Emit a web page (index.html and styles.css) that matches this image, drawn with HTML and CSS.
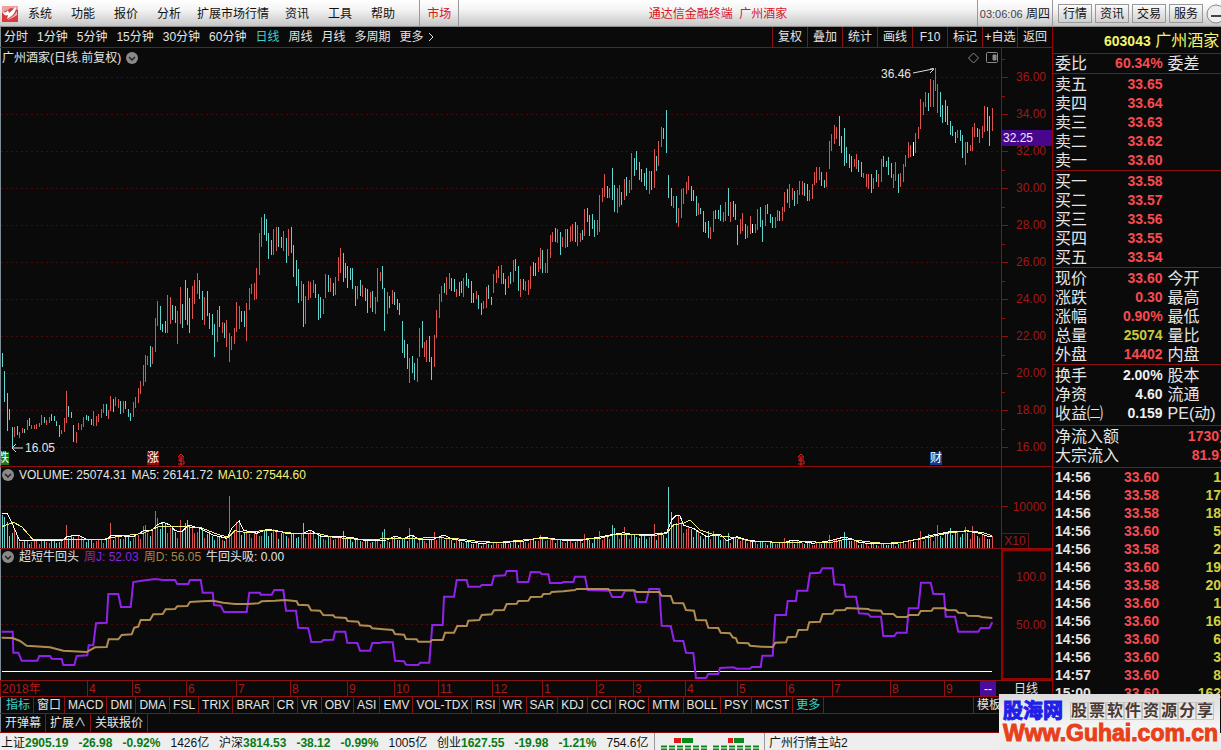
FILE: index.html
```html
<!DOCTYPE html>
<html lang="zh-CN">
<head>
<meta charset="utf-8">
<title>通达信金融终端 广州酒家</title>
<link rel="stylesheet" href="styles.css">
</head>
<body>
<header class="topbar">
  <svg class="logo" viewBox="0 0 16 16" aria-hidden="true">
    <rect width="16" height="16" fill="#d63a3c"/>
    <path d="M0 0h16v4L9 2 0 7z" fill="#e9a3a0"/>
    <path d="M1 6c2 1 4 0 5-2l1 3 7-6c0 5-3 9-9 12l1-4c-2 1-5 0-5-3z" fill="#fff"/>
    <path d="M15 5v4c-3 2-6 4-10 5 5-3 8-5 10-9z" fill="#f0b8b4"/>
  </svg>
  <nav class="menu">
    <button>系统</button><button>功能</button><button>报价</button><button>分析</button><button class="long">扩展市场行情</button><button>资讯</button><button>工具</button><button>帮助</button>
  </nav>
  <button class="market">市场</button>
  <h1 class="app-title">通达信金融终端&nbsp; 广州酒家</h1>
  <div class="clock"><span class="digits">03:06:06</span> 周四</div>
  <div class="quick">
    <button>行情</button><button>资讯</button><button>交易</button><button>服务</button>
    <button class="round" aria-label="最小化"><svg viewBox="0 0 20 20"><circle cx="10" cy="10" r="9" fill="#eee" stroke="#888"/><path d="M5 12h10" stroke="#444" stroke-width="2"/></svg></button>
  </div>
</header>

<main class="main">
  <section class="workspace">
    <div class="toolbar">
      <nav class="periods">
        <button>分时</button><button>1分钟</button><button>5分钟</button><button>15分钟</button><button>30分钟</button><button>60分钟</button><button class="on">日线</button><button>周线</button><button>月线</button><button>多周期</button><button>更多<svg class="more" viewBox="0 0 6 10"><path d="M1 1l4 4-4 4" fill="none" stroke="currentColor"/></svg></button>
      </nav>
      <nav class="tools">
        <button>复权</button><button>叠加</button><button>统计</button><button>画线</button><button>F10</button><button>标记</button><button>+自选</button><button>返回</button>
      </nav>
    </div>

    <div class="panel">
      <div class="plot">
        <div class="caption">
          <span>广州酒家(日线.前复权)</span>
          <svg class="drop" viewBox="0 0 12 12"><circle cx="6" cy="6" r="6" fill="#8a8a8a"/><path d="M3 5l3 3 3-3" fill="none" stroke="#222" stroke-width="1.5"/></svg>
          <svg class="view-icons" viewBox="0 0 30 12" fill="none" stroke="#8a8a8a"><path d="M5.500 1l5 5-5 5-5-5z"/><rect x="18.500" y=".5" width="11" height="10" rx="1"/><path d="M25 3h3v5h-3z" fill="#8a8a8a"/></svg>
        </div>
        <div class="canvas">
          <svg class="chart price" id="price" viewBox="1 68 1000 398" preserveAspectRatio="none"></svg>
          <div class="note high">36.46 <svg viewBox="0 0 22 8"><path d="M0 6L20 2M15 0l6 2-4 4" fill="none" stroke="#ddd"/></svg></div>
          <div class="note low"><svg viewBox="0 0 12 8"><path d="M12 4H1M5 0L1 4l4 4" fill="none" stroke="#ddd"/></svg>16.05</div>
          <span class="mark fall">跌</span>
          <span class="mark rise">涨</span>
          <svg class="bonus first" viewBox="0 0 8 12"><path d="M4 0L1 3h6zM7 5H2v2h5v3H1M4 3v9" fill="none" stroke="#f01818"/></svg>
          <svg class="bonus second" viewBox="0 0 8 12"><path d="M4 0L1 3h6zM7 5H2v2h5v3H1M4 3v9" fill="none" stroke="#f01818"/></svg>
          <span class="mark report">财</span>
        </div>
      </div>
      <div class="scale price-scale">
        <span>36.00</span><span>34.00</span><span>32.00</span><span>30.00</span><span>28.00</span><span>26.00</span><span>24.00</span><span>22.00</span><span>20.00</span><span>18.00</span><span>16.00</span>
        <b class="cursor-price">32.25</b>
      </div>
    </div>

    <div class="panel volume-panel">
      <div class="plot">
        <div class="caption">
          <svg class="drop" viewBox="0 0 12 12"><circle cx="6" cy="6" r="6" fill="#8a8a8a"/><path d="M3 5l3 3 3-3" fill="none" stroke="#222" stroke-width="1.5"/></svg>
          <span>VOLUME: 25074.31</span><span>MA5: 26141.72</span><span class="yellow">MA10: 27544.60</span>
        </div>
        <svg class="chart volume" id="volume" viewBox="1 483 1000 65" preserveAspectRatio="none"></svg>
      </div>
      <div class="scale volume-scale"><span>10000</span><span class="unit">X10</span></div>
    </div>

    <div class="panel index-panel">
      <div class="plot">
        <div class="caption">
          <svg class="drop" viewBox="0 0 12 12"><circle cx="6" cy="6" r="6" fill="#8a8a8a"/><path d="M3 5l3 3 3-3" fill="none" stroke="#222" stroke-width="1.5"/></svg>
          <span>超短牛回头</span><span class="purple">周J: 52.03</span><span class="gold">周D: 56.05</span><span>牛回头吸: 0.00</span>
        </div>
        <svg class="chart index" id="index" viewBox="1 565 1000 115" preserveAspectRatio="none"></svg>
      </div>
      <div class="scale index-scale"><span>100.0</span><span>50.00</span></div>
    </div>

    <div class="timeline">
      <div class="months">
        <span style="flex-grow:87">2018年</span><span style="flex-grow:45">4</span><span style="flex-grow:54">5</span><span style="flex-grow:50">6</span><span style="flex-grow:54">7</span><span style="flex-grow:57">8</span><span style="flex-grow:47">9</span><span style="flex-grow:44">10</span><span style="flex-grow:54">11</span><span style="flex-grow:50">12</span><span style="flex-grow:54">1</span><span style="flex-grow:37">2</span><span style="flex-grow:52">3</span><span style="flex-grow:52">4</span><span style="flex-grow:49">5</span><span style="flex-grow:46">6</span><span style="flex-grow:58">7</span><span style="flex-grow:54">8</span><span style="flex-grow:57">9</span>
        <i class="cursor-date">--</i>
      </div>
      <div class="cycle">日线</div>
    </div>

    <nav class="tabs">
      <button class="on">指标</button><button>窗口</button><button>MACD</button><button>DMI</button><button>DMA</button><button>FSL</button><button>TRIX</button><button>BRAR</button><button>CR</button><button>VR</button><button>OBV</button><button>ASI</button><button>EMV</button><button>VOL-TDX</button><button>RSI</button><button>WR</button><button>SAR</button><button>KDJ</button><button>CCI</button><button>ROC</button><button>MTM</button><button>BOLL</button><button>PSY</button><button>MCST</button><button class="on">更多</button><button class="template">模板</button>
    </nav>
    <nav class="tabs lower">
      <button>开弹幕</button><button>扩展∧</button><button>关联报价</button>
    </nav>
  </section>

  <aside class="quote">
    <h2 class="stock"><b>603043</b> 广州酒家</h2>
    <table class="rows">
      <tr><th>委比</th><td>60.34%</td><th>委差</th></tr>
    </table>
    <table class="rows pad">
      <tr><th>卖五</th><td>33.65</td><th></th></tr>
      <tr><th>卖四</th><td>33.64</td><th></th></tr>
      <tr><th>卖三</th><td>33.63</td><th></th></tr>
      <tr><th>卖二</th><td>33.62</td><th></th></tr>
      <tr><th>卖一</th><td>33.60</td><th></th></tr>
    </table>
    <table class="rows pad">
      <tr><th>买一</th><td>33.58</td><th></th></tr>
      <tr><th>买二</th><td>33.57</td><th></th></tr>
      <tr><th>买三</th><td>33.56</td><th></th></tr>
      <tr><th>买四</th><td>33.55</td><th></th></tr>
      <tr><th>买五</th><td>33.54</td><th></th></tr>
    </table>
    <table class="rows pad">
      <tr><th>现价</th><td>33.60</td><th>今开</th></tr>
      <tr><th>涨跌</th><td>0.30</td><th>最高</th></tr>
      <tr><th>涨幅</th><td>0.90%</td><th>最低</th></tr>
      <tr><th>总量</th><td class="olive">25074</td><th>量比</th></tr>
      <tr><th>外盘</th><td>14402</td><th>内盘</th></tr>
    </table>
    <table class="rows pad tall">
      <tr><th>换手</th><td class="plain">2.00%</td><th>股本</th></tr>
      <tr><th>净资</th><td class="plain">4.60</td><th>流通</th></tr>
      <tr><th>收益㈡</th><td class="plain">0.159</td><th>PE(动)</th></tr>
    </table>
    <table class="rows pad tall flows">
      <tr><th>净流入额</th><td>1730万</td></tr>
      <tr><th>大宗流入</th><td>81.9万</td></tr>
    </table>
    <table class="trades">
      <tr><td>14:56</td><td>33.60</td><td>1</td></tr>
      <tr><td>14:56</td><td>33.58</td><td>17</td></tr>
      <tr><td>14:56</td><td>33.58</td><td>18</td></tr>
      <tr><td>14:56</td><td>33.60</td><td>5</td></tr>
      <tr><td>14:56</td><td>33.58</td><td>2</td></tr>
      <tr><td>14:56</td><td>33.60</td><td>19</td></tr>
      <tr><td>14:56</td><td>33.58</td><td>20</td></tr>
      <tr><td>14:56</td><td>33.60</td><td>1</td></tr>
      <tr><td>14:56</td><td>33.60</td><td>16</td></tr>
      <tr><td>14:56</td><td>33.60</td><td>6</td></tr>
      <tr><td>14:56</td><td>33.60</td><td>3</td></tr>
      <tr><td>14:57</td><td>33.60</td><td>8</td></tr>
      <tr><td>15:00</td><td>33.60</td><td>162</td></tr>
    </table>
  </aside>
</main>

<footer class="status">
  <div class="index-quote">上证<b>2905.19</b><b>-26.98</b><b>-0.92%</b><span>1426亿</span></div>
  <div class="index-quote">沪深<b>3814.53</b><b>-38.12</b><b>-0.99%</b><span>1005亿</span></div>
  <div class="index-quote">创业<b>1627.55</b><b>-19.98</b><b>-1.21%</b><span>754.6亿</span></div>
  <div class="meters">
    <svg viewBox="0 0 98 14"><path d="M0 9.500h98M0 13h98" stroke="#fff"/><g fill="#e01818"><rect x="13" y="0" width="7" height="5"/><rect x="67" y="0" width="5" height="5"/></g><g fill="#0a8a1a"><rect x="21" y="0" width="11" height="5"/><rect x="73" y="0" width="10" height="5"/></g><path d="M0 8.500h47M52 8.500h46M0 11.500h47M52 11.500h46" stroke="#0a8a1a" stroke-width="2" stroke-dasharray="6 2"/></svg>
  </div>
  <div class="server">广州行情主站2</div>
</footer>

<div class="watermark">
  <div class="wm-top"><strong>股海网</strong><span class="slogan"><i>股</i><i>票</i><i>软</i><i>件</i><i>资</i><i>源</i><i>分</i><i>享</i></span></div>
  <div class="wm-url">Www.Guhai.com.cn</div>
</div>
<script src="chart.js"></script>
</body>
</html>
```
FILE: styles.css
```css
* { box-sizing: border-box; }

body {
  margin: 0;
  background: #0a0a0a;
  color: #e4e4e4;
  font: 12px/16px "Liberation Sans", "Noto Sans CJK SC", sans-serif;
  position: relative;
  overflow: hidden;
}

button {
  padding: 0;
  border: 0;
  background: none;
  color: inherit;
  font: inherit;
  white-space: nowrap;
}

svg { display: block; flex: none; }

/* top bar */
.topbar {
  display: flex;
  align-items: center;
  height: 27px;
  padding-left: 2px;
  background: linear-gradient(#fff, #f4f4f4 35%, #c8c8c8 94%, #777);
  color: #111;
  overflow: hidden;
}
.logo { width: 16px; height: 16px; }
.menu { display: flex; gap: 19px; padding: 0 24px 0 10px; }
.menu .long { margin: 0 -3px; }
.market {
  align-self: stretch;
  padding: 0 7px;
  border: solid #999;
  border-width: 0 1px;
  color: #d8171c;
}
.app-title {
  flex: 1;
  margin: 0;
  text-align: center;
  font-size: 12px;
  font-weight: normal;
  color: #d8171c;
}
.clock {
  align-self: stretch;
  padding: 0 2px;
  border: solid #999;
  border-width: 0 1px;
  line-height: 28px;
  white-space: nowrap;
}
.digits { font-size: 11px; color: #444; }
.quick { display: flex; gap: 3px; width: 168px; padding-left: 5px; }
.quick button {
  flex: none;
  width: 34px;
  height: 19px;
  border: 1px solid #999;
  background: linear-gradient(#fafafa, #d0d0d0);
}
.quick .round { width: 20px; border: 0; background: none; }
.round svg { width: 20px; height: 20px; }

/* layout */
.main { display: grid; grid-template-columns: minmax(0, 1fr) 168px; }
.workspace { border: solid #900; border-width: 0 1px 0 0; box-shadow: inset 1px 0 #7d8b96; }

.toolbar {
  display: flex;
  justify-content: space-between;
  height: 21px;
  border-bottom: 1px solid #8c1010;
  overflow: hidden;
}
.periods { display: flex; gap: 9px; padding-left: 4px; }
.periods button { display: flex; align-items: center; gap: 4px; }
.more { width: 6px; height: 10px; }
.tools { display: flex; }
.tools button { width: 35px; border-left: 1px solid #8c1010; }
.on { color: #3fd0cc; }

/* chart panels */
.panel {
  display: grid;
  grid-template-columns: minmax(0, 1fr) 51px;
  border-bottom: 1px solid #8c1010;
}
.plot { padding-left: 1px; min-width: 0; }
.caption {
  display: flex;
  align-items: center;
  gap: 5px;
  height: 16px;
  padding-left: 1px;
  white-space: nowrap;
}
.panel:nth-child(2) .caption { height: 20px; }
.drop { width: 12px; height: 12px; }
.view-icons { width: 30px; height: 12px; margin-left: auto; margin-right: 3px; }
.yellow { color: #f2f27a; }
.purple { color: #8a22e0; }
.gold { color: #a88548; }

.canvas { position: relative; overflow: hidden; }
.chart { width: 100%; shape-rendering: crispEdges; }
.price { height: 398px; }
.volume { height: 65px; }
.index { height: 115px; shape-rendering: auto; }
.grid-line { stroke: #480a0a; stroke-dasharray: 2 3; fill: none; }
.up { fill: #dc5450; }
.down { fill: #62d6ce; }
.flat { fill: #fff; }
.ma5, .ma10, .line-j, .line-d, .zero { fill: none; }
.ma5 { stroke: #fff; }
.ma10 { stroke: #f0f07c; }
.line-j { stroke: #9022ea; stroke-width: 2; }
.line-d { stroke: #b08c50; stroke-width: 2; }
.zero { stroke: #fff; }

.note { position: absolute; display: flex; align-items: center; gap: 2px; }
.note.high { right: 6.6%; top: -2px; }
.note.high svg { width: 22px; height: 8px; margin-top: -7px; }
.note.low { left: 1%; bottom: 10px; }
.note.low svg { width: 12px; height: 8px; }
.mark {
  position: absolute;
  bottom: 1px;
  width: 12px;
  height: 13px;
  line-height: 13px;
  color: #fff;
  text-align: center;
}
.fall { left: -4px; background: #147a1c; }
.rise { left: 14.6%; background: #8a0c10; }
.report { left: 92.9%; background: #0c3f8a; }
.bonus { position: absolute; bottom: 0; width: 8px; height: 12px; }
.bonus.first { left: 17.6%; }
.bonus.second { left: 79.6%; }

.scale {
  position: relative;
  border-left: 1px solid #8c1010;
  padding-right: 6px;
  text-align: right;
  color: #a01818;
}
.scale span { display: block; }
.price-scale {
  padding-top: 11px;
  background:
    linear-gradient(#8c1010 1px, transparent 1px) 0 29px / 6px 37px repeat-y,
    linear-gradient(#8c1010 1px, transparent 1px) 0 11px / 3px 37px repeat-y;
}
.price-scale span { height: 37px; line-height: 37px; }
.cursor-price {
  position: absolute;
  left: 0;
  right: 0;
  top: 82px;
  height: 16px;
  padding-left: 1px;
  background: #48068c;
  color: #f0e8ff;
  font-weight: normal;
  text-align: left;
}
.volume-scale {
  display: flex;
  flex-direction: column;
  justify-content: space-between;
  padding-top: 32px;
  background: linear-gradient(#8c1010, #8c1010) 0 39px / 6px 1px no-repeat;
}
.volume-scale .unit {
  align-self: flex-start;
  width: 27px;
  height: 15px;
  line-height: 15px;
  border: solid #6c1010;
  border-width: 1px 1px 0 0;
  text-align: center;
}
.index-panel { border-bottom: 0; }
.index-scale {
  border: 2px solid #900;
  border-right-width: 1px;
  padding: 18px 5px 0 0;
}
.index-scale span { height: 48px; line-height: 16px; }

/* timeline */
.timeline {
  display: grid;
  grid-template-columns: minmax(0, 1fr) 51px;
  height: 17px;
  border: solid #8c1010;
  border-width: 1px 0;
}
.months { position: relative; display: flex; color: #b01818; }
.months span {
  flex: 1 1 0;
  min-width: 0;
  text-indent: 2px;
  white-space: nowrap;
  box-shadow: inset 1px 0 #8c1010;
}
.cursor-date {
  position: absolute;
  right: 5px;
  top: 0;
  width: 16px;
  height: 15px;
  background: #4a0c9c;
  color: #fff;
  font-style: normal;
  text-align: center;
}
.cycle { padding-left: 13px; }

/* indicator tabs */
.tabs {
  display: flex;
  height: 17px;
  border-bottom: 1px solid #8c1010;
  padding-left: 3px;
  overflow: hidden;
}
.tabs button {
  flex: none;
  padding: 0 3px;
  border-right: 1px solid #8c1010;
  line-height: 16px;
}
.tabs .template {
  margin-left: auto;
  width: 79px;
  border: solid #8c1010;
  border-width: 0 0 0 1px;
  text-align: left;
}
.tabs.lower { height: 19px; padding-left: 1px; }
.tabs.lower button { line-height: 18px; padding: 0 4px; }

/* quote side panel */
.quote { overflow: hidden; font-size: 16px; line-height: 19px; min-width: 0; }
.stock {
  margin: 0;
  height: 27px;
  padding: 4px 0 0 51px;
  border-bottom: 1px solid #8c1010;
  color: #f4f46a;
  font-size: 16px;
  font-weight: normal;
  white-space: nowrap;
}
.stock b { font-size: 14px; }
.rows, .trades {
  width: 180px;
  table-layout: fixed;
  border-collapse: separate;
  border-spacing: 0;
  border-bottom: 1px solid #8c1010;
}
.rows.pad { padding-top: 1px; }
.rows.tall { padding-bottom: 2px; }
.rows th, .rows td, .trades td {
  height: 19px;
  padding: 0;
  white-space: nowrap;
  line-height: 19px;
}
.rows th { font-weight: normal; text-align: left; width: 70px; padding-left: 2px; }
.rows th:first-child { width: 56px; }
.rows td {
  width: 53px;
  text-align: right;
  font-size: 14px;
  font-weight: bold;
  color: #f84a50;
}
.rows th:last-child { padding-left: 5px; }
.rows td.olive { color: #c8c83c; }
.rows td.plain { color: #f0f0f0; }
.flows th:first-child { width: 80px; }
.flows td { width: 100px; }
.trades { width: 168px; border: 0; font-size: 14px; font-weight: bold; }
.trades td { height: 18px; line-height: 18px; padding-left: 2px; }
.trades td + td { padding: 0; text-align: right; color: #f84a50; }
.trades td + td + td { color: #d0d040; }
.trades td:first-child { width: 52px; }
.trades td:nth-child(2) { width: 54px; }

/* status bar */
.status {
  display: flex;
  height: 18px;
  background: #eee;
  color: #111;
  line-height: 20px;
  white-space: nowrap;
  overflow: hidden;
}
.index-quote { flex: none; display: flex; width: 218px; padding-left: 1px; }
.index-quote b { color: #0a7a18; margin-right: 10px; }
.meters { padding: 5px 5px 0 6px; border: solid #999; border-width: 0 1px; }
.meters svg { width: 98px; height: 14px; }
.server { padding-left: 4px; }

/* site mark */
.watermark {
  position: absolute;
  right: 1px;
  bottom: 0;
  width: 221px;
  height: 57px;
  padding: 4px 0 0 4px;
  background: linear-gradient(#dcdcdc, #f4f4f4 55%, #eaeaea);
  overflow: hidden;
}
.wm-top { display: flex; align-items: center; gap: 7px; height: 26px; }
.wm-top strong { color: #2020e8; font-size: 20px; line-height: 26px; -webkit-text-stroke: 1px #2020e8; }
.slogan { display: flex; }
.slogan i {
  width: 18px;
  height: 18px;
  border: 1px solid #c8c4c0;
  color: #4a3a34;
  font-size: 16px;
  line-height: 16px;
  font-style: normal;
  font-weight: bold;
  text-align: center;
}
.wm-url {
  color: #e8401c;
  font-size: 23px;
  font-weight: bold;
  line-height: 18px;
  -webkit-text-stroke: 1px #e8401c;
}
```
FILE: chart.js
```js
// Daily bars: top edge, colour (r up, c down, w flat), bottom edge.
const bars = `
353c367 371c402 393c431 409c420 427c447 427r437 426c435 432r438 428r433 429c433
420r430 418c426 425r429 425r429 424r429 423r427 415r425 417c423 420r425 417r423
414c421 416c421 421c426 425c437 430r434 418r432 391r423 406c417 412c418 425c442
432r443 423r430 424r430 417r427 415c420 416c421 419c425 411r426 416r426 414r422
409r418 404r413 404c416 410r419 396r411 399c412 397r406 399r408 401c414 401r413
401c409 409c417 413c421 402r417 397r408 388r403 381r394 365r386 355r382 356r365
346c367 347r364 318r352 301r326 306c330 324c332 321c333 295r333 297r324 305c320
306c323 311r344 287r324 304c328 280c320 288c325 298c333 286r319 280r304 273r294
280c299 291c320 297r325 291c316 313c329 314c335 324c357 310r342 306c327 322r333
323c338 320r347 333r362 336r350 328r344 302r332 306r329 311c322 311c327 303r341
288r310 284r294 283r300 268r299 233r275 217r247 214c235 219c241 233c259 240c255
229r255 227r251 227c247 237c248 231r251 238c263 229r256 227c253 245c277 260c286
269c303 281r301 284c327 296r324 281r300 282r298 280r293 284c298 294c320 297c318
299r314 274r298 275c292 278r292 283c296 277r295 257r281 248r273 253c282 263c278
266c288 268c280 268c289 286c306 286r299 280c296 285r297 288c301 289c313 292r308
291c312 297r314 268r302 272r281 266c289 288c331 292r314 296c308 290r304 292c305
299c310 303c315 321c353 340c358 344c369 358r383 356c373 363c380 358r382 328r357
321c348 342r357 340r362 336c362 357c380 335r367 310r338 294r318 286r302 283c293
277r295 273r289 278c291 279c292 289r297 282c296 281c293 278r297 273c286 279c288
281c303 293c303 291r299 295c309 303c315 301r309 287r308 285c299 297c305 274r293
270r283 266r278 265r284 273c284 279c295 276r288 272c284 260r282 259c271 266c291
279r297 279c290 281r291 280r295 266r289 262c276 263c276 257r272 248r269 250c273
263r273 249r273 235r258 232r242 228c242 229r243 232c255 237r247 229r248 229c247
226r242 224r241 222c242 225r246 233r242 230c240 209r236 208c222 215c236 214c229
220c237 220r235 195r232 188r202 174r197 186c198 188r198 168c200 185c212 188r213
185r207 192c205 179r200 177c196 180r193 153r190 158c176 151c170 162c180 169c182
173c186 168c190 171r194 171c190 149r188 156c171 141r166 127r147 128c139 110c153
175c198 188c206 196r208 196c223 208r227 189r218 188r204 182r194 176r190 186c201
190c201 196c216 203r215 208c214 211c232 222c233 221c238 227r239 211r232 210c219
210c219 205c221 212r222 202r221 188c216 202r222 201c217 204c220 225c245 219r234
213r231 224c239 226r238 216r234 224w233 224r233 209r230 207c227 220c242 205r226
204c214 214c223 217c228 217r228 210r221 211c221 207r221 192r212 189c203 184r208
188r200 191c206 190r204 181r195 181r195 183c196 184c201 190r201 184r199 172r185
167r183 167r180 172c186 180c188 172r187 141r169 134r151 125r144 127r139 116c146
136c153 128c166 147c163 154c168 156c172 159r167 154r169 160c172 162c177 173r178
174r187 174r189 174c193 178r189 170c182 174r187 159r182 156c167 161c167 157c175
163c178 174r188 162r181 174c193 173r187 164r182 155r167 142r158 145r157 142w156
133r153 127r139 99r129 102r115 92r107 93c111 79r107 80r107 68r91 84r113
92c117 105c123 100c122 106c125 121c135 126c136 132c143 130r138 130c141 135c158
142r165 142c153 145r151 127r151 123r137 128c137 129r143 126r138 106r132 107c131
116c146 108r131`.trim().split(/\s+/).map(t => {
  const m = t.match(/(\d+)(\w)(\d+)/);
  return { top: +m[1], kind: m[2], bottom: +m[3] };
});

// Line series are stored in thirds of a unit: x, y pairs.
const ma5 = [5,430,22,430,40,468,58,510,90,512,150,512,190,510,200,500,235,495,265,510,320,508,335,495,400,500,435,480,455,482,470,465,490,457,510,465,525,482,545,485,565,465,600,475,640,495,680,505,695,475,718,453,730,480,770,490,800,478,830,482,860,490,905,492,930,480,965,500,1000,498,1050,502,1100,512,1160,510,1185,498,1210,507,1235,495,1260,510,1300,508,1330,495,1360,508,1440,520,1500,517,1560,515,1630,502,1700,512,1750,510,1820,497,1870,488,1890,492,1940,495,2000,488,2015,450,2027,437,2040,437,2050,465,2080,475,2120,500,2160,492,2180,512,2210,500,2250,512,2350,518,2380,510,2440,520,2490,512,2530,502,2550,505,2580,518,2640,522,2690,520,2750,508,2800,495,2850,485,2900,483,2940,490,2960,498,2977,500];
const ma10 = [5,470,40,457,65,470,100,510,200,508,300,510,350,500,430,490,480,468,530,470,600,472,650,492,685,502,705,482,740,488,800,480,880,490,950,490,1000,502,1100,510,1170,505,1240,505,1300,503,1360,505,1440,515,1500,517,1620,505,1700,510,1800,505,1850,492,1960,497,2000,490,2020,465,2050,460,2070,450,2100,480,2150,497,2210,503,2250,513,2350,518,2430,515,2490,518,2540,507,2600,515,2650,520,2700,518,2780,503,2840,490,2900,482,2950,488,2977,497];
const spikes = [7,435,13,440,22,455,28,497,37,488,199,465,334,458,430,468,436,465,466,422,475,443,541,450,556,458,562,450,688,377,910,458,1030,482,1147,487,1156,477,1228,475,1303,487,1620,495,1756,492,1801,483,1837,465,1843,475,1873,470,1963,462,2008,350,2014,427,2044,455,2125,483,2140,483,2185,490,2356,505,2488,495,2533,487,2764,483,2785,492,2815,465,2851,475,2896,472,2917,467];
const lineJ = [5,215,38,215,40,278,55,278,65,302,112,302,118,288,150,288,155,296,185,297,190,315,223,315,230,288,262,286,266,256,280,255,288,190,320,188,325,102,355,102,363,141,392,141,400,66,425,62,465,57,490,60,525,60,532,72,565,72,570,60,602,60,608,98,638,98,642,135,662,137,672,156,740,156,748,98,780,98,782,104,815,104,823,90,850,90,858,152,888,152,895,203,925,205,934,246,965,245,970,240,1000,239,1005,215,1036,215,1042,248,1072,249,1080,272,1110,272,1117,249,1140,249,1150,246,1178,247,1185,302,1212,304,1218,314,1255,315,1260,308,1288,308,1297,195,1328,195,1332,110,1362,110,1370,60,1400,60,1405,80,1440,80,1445,75,1475,75,1482,48,1515,46,1520,33,1550,33,1553,66,1585,66,1592,36,1620,37,1625,42,1645,43,1650,69,1685,69,1690,66,1720,66,1725,50,1755,50,1763,90,1828,92,1837,111,1865,111,1875,92,1902,92,1910,126,1938,126,1948,87,1978,87,1985,197,2012,198,2022,242,2050,243,2058,278,2080,279,2088,354,2118,354,2125,342,2155,342,2160,324,2200,322,2210,326,2250,326,2255,321,2282,321,2287,287,2318,287,2326,165,2358,165,2363,123,2388,123,2392,92,2422,92,2430,40,2460,38,2467,25,2498,25,2503,73,2532,75,2537,110,2568,110,2577,160,2605,162,2612,170,2643,170,2650,228,2683,228,2690,218,2720,218,2726,145,2755,145,2763,68,2792,68,2800,102,2832,102,2837,170,2865,170,2875,215,2935,215,2942,204,2968,204,2977,187];
const lineD = [5,233,38,234,60,243,80,257,150,262,190,272,260,276,285,262,320,261,326,238,355,238,365,225,395,223,403,203,415,200,422,180,450,180,460,163,488,162,497,148,525,147,532,139,562,138,570,126,605,124,640,122,670,128,705,132,740,132,775,130,785,124,825,122,855,120,890,124,895,134,925,136,933,151,960,152,970,165,1000,166,1005,172,1038,174,1043,183,1075,185,1080,196,1110,198,1117,205,1150,208,1178,210,1185,222,1212,224,1218,237,1250,238,1255,245,1290,245,1297,240,1328,240,1335,218,1362,218,1372,198,1400,198,1405,182,1438,180,1445,165,1475,163,1482,151,1512,150,1520,132,1550,131,1555,123,1585,122,1592,111,1625,110,1630,102,1650,101,1655,96,1690,94,1725,90,1730,87,1825,87,1828,90,1902,91,1910,96,1978,96,1985,107,2012,108,2020,129,2050,130,2058,150,2082,152,2088,180,2118,181,2125,203,2155,204,2162,218,2190,220,2198,232,2208,235,2213,248,2245,250,2250,257,2285,260,2318,261,2326,248,2358,247,2363,232,2388,230,2395,210,2422,209,2428,187,2460,185,2468,162,2498,161,2505,151,2535,150,2540,144,2605,147,2612,151,2643,152,2648,161,2680,162,2690,171,2720,171,2728,165,2755,165,2762,153,2795,152,2800,145,2835,145,2840,150,2868,151,2875,158,2895,159,2903,167,2935,168,2945,171,2977,174];

const kinds = { r: 'up', c: 'down', w: 'flat' };
const barX = i => Math.floor((7 + 7.406 * i) / 3);
const rect = (x, y, h, kind) => `<rect class="${kinds[kind]}" x="${x}" y="${y}" width="1" height="${h}"/>`;
const grid = ys => ys.map(y => `<path class="grid-line" d="M1 ${y + 0.5}H1001"/>`).join('');
const polyline = (cls, pts, base) => {
  const out = [];
  for (let i = 0; i < pts.length; i += 2) out.push((pts[i] / 3).toFixed(1) + ',' + (base + pts[i + 1] / 3).toFixed(1));
  return `<polyline class="${cls}" points="${out.join(' ')}"/>`;
};
const valueAt = (pts, x) => {
  for (let i = 2; i < pts.length; i += 2) {
    if (pts[i] >= x) {
      const t = (x - pts[i - 2]) / (pts[i] - pts[i - 2]);
      return pts[i - 1] + t * (pts[i + 1] - pts[i - 1]);
    }
  }
  return pts[pts.length - 1];
};

document.getElementById('price').innerHTML =
  grid([77, 114, 151, 188, 225, 262, 299, 336, 373, 410, 447]) +
  bars.map((b, i) => rect(barX(i), b.top, b.bottom - b.top, b.kind)).join('');

document.getElementById('volume').innerHTML = grid([506]) +
  bars.map((b, i) => {
    const x = 7 + 7.406 * i;
    let top = 540 - (540 - valueAt(ma5, x)) * (0.6 + 0.45 * Math.abs(Math.sin(i * 2.3)));
    for (let s = 0; s < spikes.length; s += 2) if (Math.abs(spikes[s] - x) < 3.7) top = spikes[s + 1];
    const y = Math.round(370 + top / 3);
    return rect(barX(i), y, 548 - y, b.kind);
  }).join('') + polyline('ma5', ma5, 370) + polyline('ma10', ma10, 370);

document.getElementById('index').innerHTML = grid([576, 624]) +
  '<path class="zero" d="M2 671.500H992"/>' +
  polyline('line-j', lineJ, 560) + polyline('line-d', lineD, 560);
```
